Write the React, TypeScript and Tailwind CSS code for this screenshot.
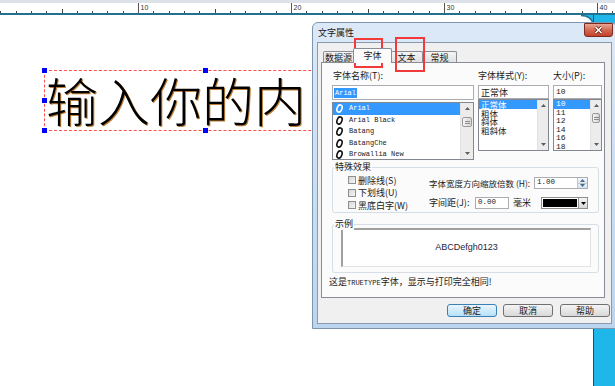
import React from 'react';

const ui = "font-['Noto_Sans_CJK_SC',sans-serif]";
const mono = "font-['Liberation_Mono','Noto_Sans_CJK_SC',monospace]";

function Ruler() {
  const ticks: React.ReactNode[] = [];
  for (let k = 1; k <= 41; k++) {
    const x = Math.round(-15 + k * 15.3) + 0.5;
    if (k % 10 === 0) {
      ticks.push(
        <g key={k}>
          <line x1={x} y1={3} x2={x} y2={13} stroke="#555" />
          <text x={x + 2} y={9.5} fontSize="7" fill="#333" fontFamily="Liberation Sans, sans-serif">
            {k}
          </text>
        </g>
      );
    } else {
      ticks.push(<line key={k} x1={x} y1={k % 5 === 0 ? 9 : 11} x2={x} y2={13} stroke="#444" />);
    }
  }
  return (
    <svg width="615" height="15" className="block">
      <rect x="0" y="0" width="615" height="3" fill="#dde2e8" />
      <rect x="0" y="3" width="615" height="10" fill="#ffffff" />
      {ticks}
      <rect x="0" y="13" width="615" height="2" fill="#24708f" />
    </svg>
  );
}

function Arrow({ dir, color = '#5f5f5f' }: { dir: 'up' | 'down'; color?: string }) {
  return (
    <svg width="5" height="3" viewBox="0 0 5 3">
      <path d={dir === 'up' ? 'M0,3 L2.5,0 L5,3 Z' : 'M0,0 L5,0 L2.5,3 Z'} fill={color} />
    </svg>
  );
}

function ScrollBar({ width, thumb }: { width: string; thumb?: string }) {
  return (
    <div className={`${width} h-full flex flex-col bg-[#ececec] border-l border-[#e2e2e2]`}>
      <div className="h-[11px] flex items-center justify-center">
        <Arrow dir="up" />
      </div>
      {thumb && (
        <div className={`${thumb} mx-[1px] h-[10px] rounded-[2px] border border-[#9a9a9a] bg-linear-to-r from-[#f6f6f6] to-[#d4d4d4] flex flex-col items-center justify-center gap-[1px]`}>
          <div className="w-[5px] h-px bg-[#8a8a8a]" />
          <div className="w-[5px] h-px bg-[#8a8a8a]" />
        </div>
      )}
      <div className="mt-auto h-[11px] flex items-center justify-center">
        <Arrow dir="down" />
      </div>
    </div>
  );
}

function OIcon({ sel }: { sel?: boolean }) {
  return (
    <svg width="9" height="9" viewBox="0 0 9 9">
      <ellipse
        cx="4.5"
        cy="4.5"
        rx="2.4"
        ry="3.7"
        transform="rotate(20 4.5 4.5)"
        fill="none"
        stroke={sel ? '#ffffff' : '#111111'}
        strokeWidth="1.6"
      />
    </svg>
  );
}

function Check({ label }: { label: string }) {
  return (
    <div className="h-[12.5px] flex items-center gap-[2px]">
      <div className="w-[8px] h-[8px] border border-[#8f8f8f] bg-linear-to-br from-[#d6d6d6] to-[#f7f7f7]" />
      <span>{label}</span>
    </div>
  );
}

function Group({ label, className, children }: { label: string; className: string; children: React.ReactNode }) {
  return (
    <div className={`relative ml-[10px] w-[267px] border border-[#d5dfe5] rounded-[3px] ${className}`}>
      <span className="absolute -top-[7px] left-[1px] px-[1px] bg-[#fbfbfb] leading-[12px]">{label}</span>
      {children}
    </div>
  );
}

function Button({ label, primary, className }: { label: string; primary?: boolean; className?: string }) {
  return (
    <div
      className={`w-[50px] h-[13px] rounded-[3px] border flex items-center justify-center leading-none ${
        primary
          ? 'border-[#3c7fb1] bg-linear-to-b from-[#eaf6fd] to-[#b6e0f8]'
          : 'border-[#707070] bg-linear-to-b from-[#f4f4f4] to-[#d9d9d9]'
      } ${className ?? ''}`}
    >
      {label}
    </div>
  );
}

const fonts = ['Arial', 'Arial Black', 'Batang', 'BatangChe', 'Browallia New'];
const styles = ['正常体', '粗体', '斜体', '粗斜体'];
const sizes = ['10', '11', '12', '14', '16', '18'];

function Dialog() {
  return (
    <div className={`absolute left-[312px] top-[22px] w-[305px] h-[307px] rounded-t-[6px] border border-[#7d95ae] bg-linear-to-b from-[#dce9f7] via-[#cadff3] to-[#bcd5ee] flex flex-col ${ui} text-[9px] text-[#1a1a1a] whitespace-nowrap`}>
      <div className="h-[19px] flex items-start">
        <span className="pl-[5px] pt-[4px] leading-[12px]">文字属性</span>
        <div className="ml-auto mr-[3px] w-[29px] h-[14px] rounded-b-[3px] border border-[#7b2b21] bg-linear-to-b from-[#e8a593] via-[#d36a52] to-[#c2402a] flex items-center justify-center">
          <svg width="9" height="8" viewBox="0 0 9 8">
            <path d="M1.5,1 L7.5,7 M7.5,1 L1.5,7" stroke="#5a1a10" strokeWidth="3" />
            <path d="M1.5,1 L7.5,7 M7.5,1 L1.5,7" stroke="#ffffff" strokeWidth="1.6" />
          </svg>
        </div>
      </div>

      <div className="mx-[4px] h-[282px] border border-[#8a9bb0] bg-[#f0f0f0] flex flex-col">
        <div className="h-[19px] pl-[5px] flex items-end">
          <div className="w-[31px] h-[11px] border border-b-0 border-[#898c95] rounded-t-[2px] bg-linear-to-b from-[#f5f5f5] to-[#e1e1e1] flex items-center justify-center leading-none">
            数据源
          </div>
          <div className="relative z-10 -mb-px w-[39px] h-[15px] border border-b-0 border-[#898c95] rounded-t-[2px] bg-[#fbfbfb] flex items-start justify-center pt-[2px] leading-none -ml-px">
            字体
          </div>
          <div className="w-[32px] h-[11px] border border-b-0 border-l-0 border-[#898c95] rounded-t-[2px] bg-linear-to-b from-[#f5f5f5] to-[#e1e1e1] flex items-center justify-center leading-none -ml-px">
            文本
          </div>
          <div className="w-[34px] h-[11px] border border-b-0 border-l-0 border-[#898c95] rounded-t-[2px] bg-linear-to-b from-[#f5f5f5] to-[#e1e1e1] flex items-center justify-center leading-none">
            常规
          </div>
        </div>

        <div className="ml-[3px] w-[284px] h-[236px] border border-[#898c95] bg-[#fbfbfb] flex flex-col">
          <div className="flex pl-[10px] pt-[7px]">
            <div className="w-[142px] flex flex-col">
              <div className="h-[12px] leading-[12px] pl-px">字体名称(T):</div>
              <div className="mt-[3px] h-[15px] border border-[#abadb3] bg-white flex items-center pl-px">
                <span className={`${mono} text-[7px] leading-[10px] px-px bg-[#3399ff] text-white`}>Arial</span>
              </div>
              <div className="mt-[2px] h-[58px] border border-[#828790] bg-white flex overflow-hidden">
                <div className="flex-1 flex flex-col">
                  {fonts.map((f, i) => (
                    <div key={f} className={`h-[11.5px] shrink-0 flex items-center gap-[5px] pl-[2px] ${i === 0 ? 'bg-[#3399ff] text-white' : ''}`}>
                      <OIcon sel={i === 0} />
                      <span className={`${mono} text-[7px] leading-none`}>{f}</span>
                    </div>
                  ))}
                </div>
                <ScrollBar width="w-[13px]" thumb="mt-[3px]" />
              </div>
            </div>

            <div className="ml-[4px] w-[71px] flex flex-col">
              <div className="h-[12px] leading-[12px]">字体样式(Y):</div>
              <div className="mt-[3px] h-[14px] border border-[#abadb3] bg-white flex items-center pl-[2px] leading-none">正常体</div>
              <div className="h-[52px] border border-[#828790] bg-white flex overflow-hidden">
                <div className="flex-1 flex flex-col">
                  {styles.map((s, i) => (
                    <div key={s} className={`h-[8.7px] shrink-0 flex items-center pl-[2px] text-[8.5px] leading-none ${i === 0 ? 'bg-[#3399ff] text-white' : ''}`}>
                      {s}
                    </div>
                  ))}
                </div>
                <ScrollBar width="w-[11px]" />
              </div>
            </div>

            <div className="ml-[4px] w-[49px] flex flex-col">
              <div className="h-[12px] leading-[12px]">大小(P):</div>
              <div className={`mt-[3px] h-[14px] border border-[#abadb3] bg-white flex items-center pl-[2px] ${mono} text-[8px] leading-none`}>10</div>
              <div className="h-[52px] border border-[#828790] bg-white flex overflow-hidden">
                <div className="flex-1 flex flex-col">
                  {sizes.map((s, i) => (
                    <div key={s} className={`h-[8.5px] shrink-0 flex items-center pl-[2px] ${mono} text-[8px] leading-none ${i === 0 ? 'bg-[#3399ff] text-white' : ''}`}>
                      {s}
                    </div>
                  ))}
                </div>
                <ScrollBar width="w-[11px]" thumb="mt-[2px]" />
              </div>
            </div>
          </div>

          <Group label="特殊效果" className="mt-[7px] h-[46px] flex">
            <div className="w-[96px] pl-[15px] pt-[6px] flex flex-col">
              <Check label="删除线(S)" />
              <Check label="下划线(U)" />
              <Check label="黑底白字(W)" />
            </div>
            <div className="pt-[9px] flex flex-col">
              <div className="h-[12px] flex items-center">
                <span className="w-[105px] text-[8.5px]">字体宽度方向缩放倍数 (H):</span>
                <div className="w-[54px] h-[12px] border border-[#abadb3] bg-white flex items-center">
                  <span className={`${mono} text-[7.5px] pl-[2px] flex-1`}>1.00</span>
                  <div className="w-[10px] h-full flex flex-col border-l border-[#c5c5c5]">
                    <div className="flex-1 flex items-center justify-center bg-linear-to-b from-[#f4f8fc] to-[#dde8f3]"><Arrow dir="up" color="#4a6a8a" /></div>
                    <div className="flex-1 flex items-center justify-center bg-linear-to-b from-[#eaf1f8] to-[#d4e2f0] border-t border-[#c5c5c5]"><Arrow dir="down" color="#4a6a8a" /></div>
                  </div>
                </div>
              </div>
              <div className="mt-[8px] h-[12px] flex items-center">
                <span className="w-[46px]">字间距(J):</span>
                <div className={`w-[34px] h-[12px] border border-[#abadb3] bg-white flex items-center pl-[2px] ${mono} text-[7.5px]`}>0.00</div>
                <span className="ml-[4px] w-[28px]">毫米</span>
                <div className="w-[38px] h-[12px] border border-[#8f8f8f] p-px bg-white">
                  <div className="w-full h-full bg-black" />
                </div>
                <div className="w-[9px] h-[12px] border border-l-0 border-[#8f8f8f] bg-linear-to-b from-[#f4f4f4] to-[#dadada] flex items-center justify-center">
                  <Arrow dir="down" color="#000" />
                </div>
              </div>
            </div>
          </Group>

          <Group label="示例" className="mt-[11px] h-[49px] pl-[8px] pt-[3px]">
            <div className="w-[250px] h-[39px] border-t-2 border-l-2 border-b border-r border-t-[#a0a0a0] border-l-[#a0a0a0] border-b-[#e3e3e3] border-r-[#e3e3e3] bg-white flex items-center justify-center">
              <span className="font-['Liberation_Sans',sans-serif] text-[9px] text-[#1d1d45]">ABCDefgh0123</span>
            </div>
          </Group>

          <div className="mt-[3px] ml-[7px] h-[12px] leading-[12px]">
            这是<span className={`${mono} text-[7px]`}>TRUETYPE</span>字体，显示与打印完全相同!
          </div>
        </div>

        <div className="mt-[6px] pl-[129px] flex">
          <Button label="确定" primary />
          <Button label="取消" className="ml-[6px]" />
          <Button label="帮助" className="ml-[7px] w-[49px]" />
        </div>
      </div>

      <div className="absolute left-[41px] top-[15px] w-[29px] h-[30px] border-2 border-[#f23a3a]" />
      <div className="absolute left-[82px] top-[14px] w-[30px] h-[35px] border-2 border-[#f23a3a]" />
    </div>
  );
}

function Handle({ className }: { className: string }) {
  return <div className={`absolute w-[5px] h-[5px] bg-[#0000ff] ${className}`} />;
}

export default function App() {
  return (
    <div className="relative w-[615px] h-[386px] overflow-hidden bg-white">
      <Ruler />
      <div className="flex h-[371px]">
        <div className="flex-1 pl-[44px] pt-[55px]">
          <div className="relative w-[322px] h-[61px] border border-dashed border-[#ff5050]">
            <div className="pl-[1px] font-['Noto_Sans_CJK_SC',sans-serif] font-light text-[52px] leading-[58px] text-black whitespace-nowrap [text-shadow:1px_1px_0_#c0803a]">
              输入你的内
            </div>
            <Handle className="-left-[3px] -top-[3px]" />
            <Handle className="left-[158px] -top-[3px]" />
            <Handle className="-left-[3px] top-[27px]" />
            <Handle className="-left-[3px] -bottom-[3px]" />
            <Handle className="left-[158px] -bottom-[3px]" />
          </div>
        </div>
        <div className="relative w-[22px] bg-[#1fb6ea] border-l border-[#1d4f6a]">
          <svg width="12" height="9" className="absolute -left-[13px] top-0">
            <path d="M0,0 Q10,0 12,9 L12,0 Z" fill="#1fb6ea" />
            <path d="M0,0.5 Q10,0.5 12,9" stroke="#24708f" fill="none" strokeWidth="1.5" />
          </svg>
        </div>
      </div>
      <Dialog />
    </div>
  );
}
